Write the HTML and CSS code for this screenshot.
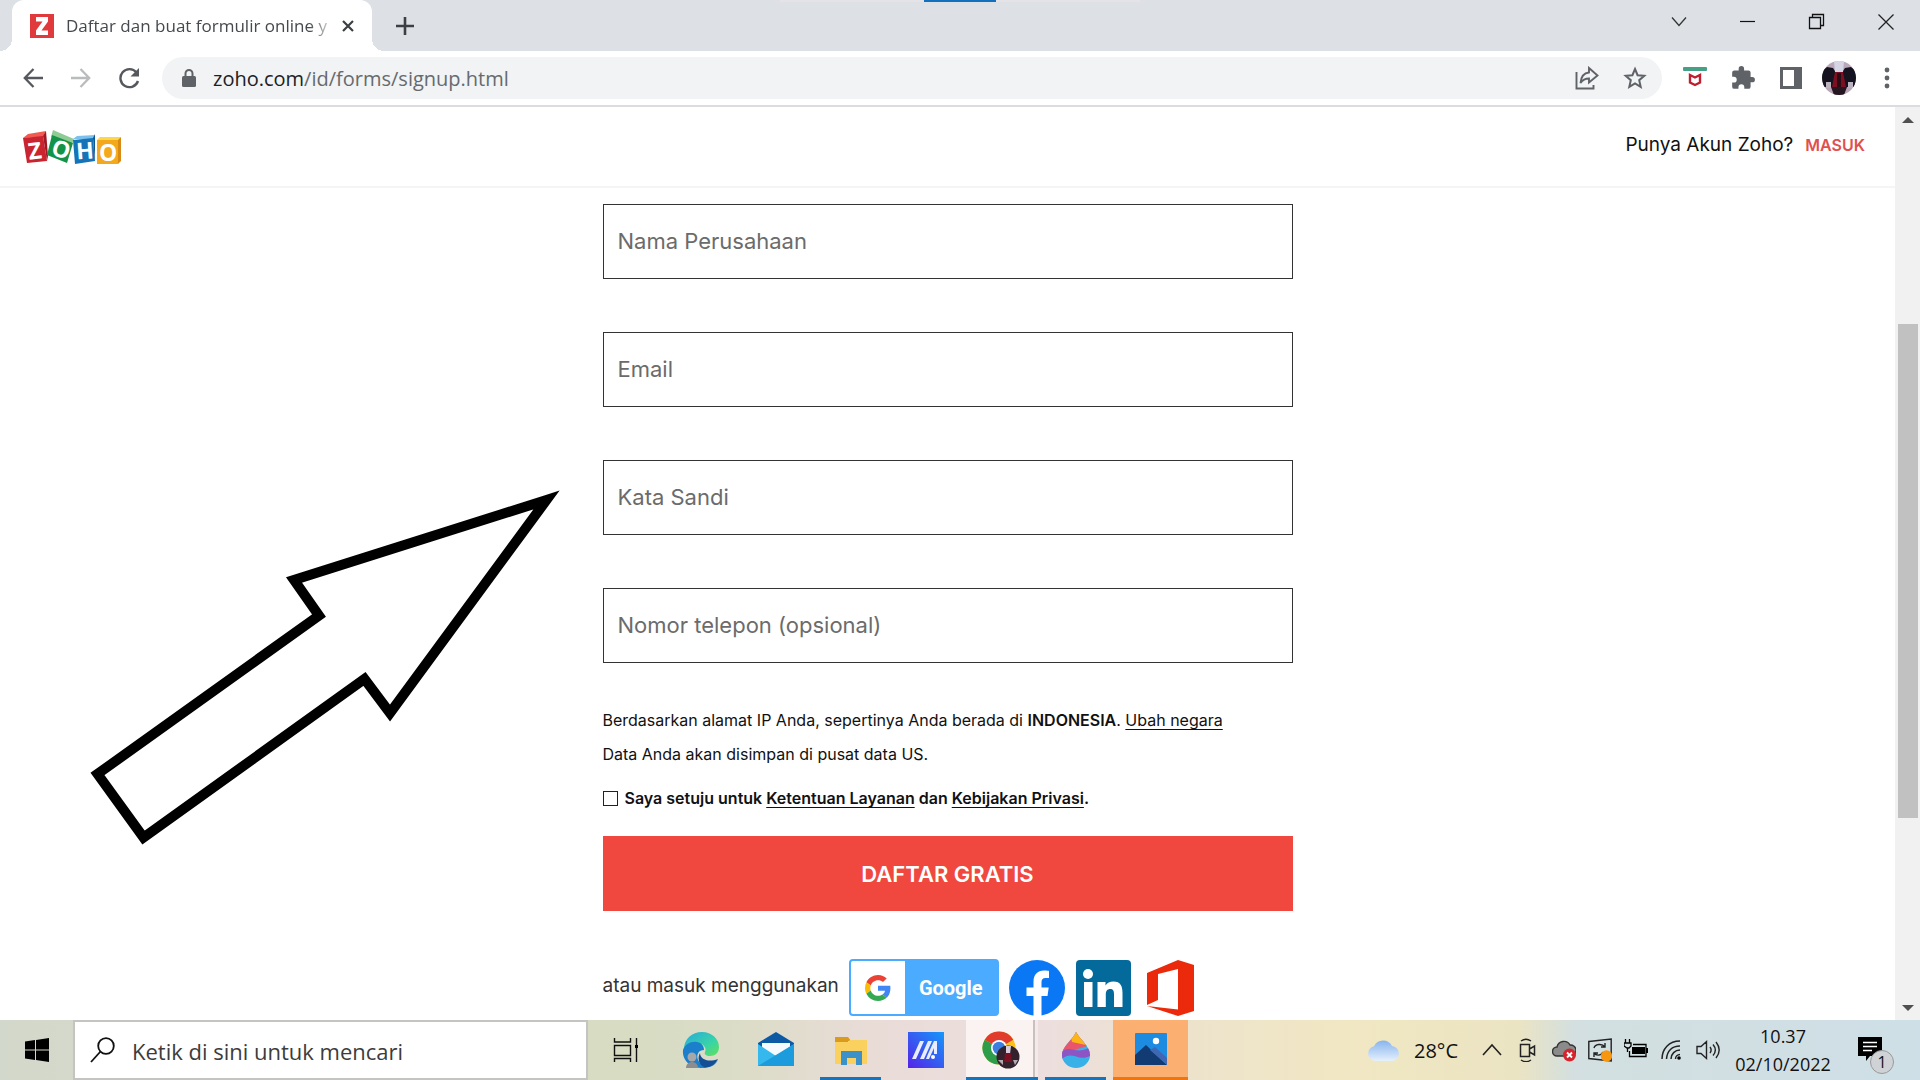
FILE: index.html
```html
<!DOCTYPE html>
<html lang="id">
<head>
<meta charset="utf-8">
<title>Daftar dan buat formulir online</title>
<link rel="stylesheet" href="styles.css">
</head>
<body>
<div class="tabstrip">
  <div class="snap-hint"></div>
  <div class="tab">
    <svg class="favicon" viewBox="0 0 24 24"><rect width="24" height="24" fill="#e03a3c"/><path d="M6 3h12v4.500L11.500 16.500H18V21H6v-4.500L12.500 7.500H6z" fill="#fff"/></svg>
    <span class="tab-title">Daftar dan buat formulir online y</span>
    <button class="plain tab-close" aria-label="Tutup tab"><svg width="14" height="14" viewBox="0 0 14 14"><path d="M2 2l10 10M12 2L2 12" stroke="#3c4043" stroke-width="2.200"/></svg></button>
  </div>
  <button class="plain new-tab" aria-label="Tab baru"><svg width="18" height="18" viewBox="0 0 18 18"><path d="M9 0v18M0 9h18" stroke="#3c4043" stroke-width="2.600"/></svg></button>
  <div class="window-buttons">
    <button class="plain" aria-label="Cari tab"><svg width="18" height="18" viewBox="0 0 18 18"><path d="M2 4.500l7 8 7-8" fill="none" stroke="#333" stroke-width="1.300"/></svg></button>
    <button class="plain" aria-label="Minimalkan"><svg width="18" height="18" viewBox="0 0 18 18"><path d="M1 8.500h15" stroke="#111" stroke-width="1.200"/></svg></button>
    <button class="plain" aria-label="Pulihkan"><svg width="18" height="18" viewBox="0 0 18 18"><path d="M1.500 4.500h11v11h-11zM4.500 4.500v-3h11v11h-3" fill="none" stroke="#111" stroke-width="1.300"/></svg></button>
    <button class="plain" aria-label="Tutup"><svg width="18" height="18" viewBox="0 0 18 18"><path d="M1.500 1.500l15 15M16.500 1.500l-15 15" stroke="#222" stroke-width="1.300"/></svg></button>
  </div>
</div>

<div class="toolbar">
  <div class="slots">
    <button class="plain slot" aria-label="Kembali"><svg width="20" height="20" viewBox="0 0 20 20"><path d="M20 10H2M10.500 1L1.800 10l8.700 9" fill="none" stroke="#55585c" stroke-width="2.300"/></svg></button>
    <button class="plain slot" aria-label="Maju"><svg width="20" height="20" viewBox="0 0 20 20"><path d="M0 10h18M9.500 1l8.700 9-8.700 9" fill="none" stroke="#b9bbbd" stroke-width="2.300"/></svg></button>
    <button class="plain slot" aria-label="Muat ulang"><svg width="22" height="22" viewBox="0 0 22 22"><path d="M18.500 5.500A9 9 0 1 0 20 14" fill="none" stroke="#55585c" stroke-width="2.400"/><path d="M21 1v8.500h-8.500z" fill="#55585c"/></svg></button>
  </div>
  <div class="omnibox">
    <svg width="14" height="18" viewBox="0 0 14 18"><rect y="7" width="14" height="11" rx="1.500" fill="#5f6368"/><path d="M3.500 8V4.500a3.500 3.500 0 0 1 7 0V8" fill="none" stroke="#5f6368" stroke-width="2"/></svg>
    <div class="url"><span class="host">zoho.com</span>/id/forms/signup.html</div>
    <button class="plain slot" aria-label="Bagikan"><svg width="24" height="24" viewBox="0 0 24 24"><path d="M1.500 6v16.500h17V19M14 2l8.500 7.500L14 16.500v-4c-4 0-6.500 1.500-8.500 4.500C6 11 9 7 14 6.500z" fill="none" stroke="#5f6368" stroke-width="1.900"/></svg></button>
    <button class="plain slot" aria-label="Tandai"><svg width="24" height="24" viewBox="0 0 24 24"><path d="M12 3l2.600 6.200 6.700.6-5.100 4.400 1.500 6.600-5.700-3.500-5.700 3.500 1.500-6.600-5.100-4.400 6.700-.6z" fill="none" stroke="#5f6368" stroke-width="2"/></svg></button>
  </div>
  <div class="slots">
    <button class="plain slot" aria-label="McAfee"><svg width="24" height="24" viewBox="0 0 24 24"><rect y="1" width="24" height="4" rx="1" fill="#45a086"/><path d="M7 9l5 2.500L17 9v7.500L12 19l-5-2.500z" fill="none" stroke="#c01f31" stroke-width="2.400"/></svg></button>
    <button class="plain slot" aria-label="Ekstensi"><svg width="26" height="26" viewBox="0 0 24 24"><path d="M20.500 11H19V7a2 2 0 0 0-2-2h-4V3.500a2.500 2.500 0 0 0-5 0V5H4a2 2 0 0 0-2 2v3.800h1.500a2.700 2.700 0 0 1 0 5.400H2V20a2 2 0 0 0 2 2h3.800v-1.500a2.700 2.700 0 0 1 5.400 0V22H17a2 2 0 0 0 2-2v-4h1.500a2.500 2.500 0 0 0 0-5z" fill="#5f6368"/></svg></button>
    <button class="plain slot" aria-label="Panel samping"><svg width="22" height="22" viewBox="0 0 22 22"><path d="M0 0h22v22H0zM3 3v16h11V3z" fill="#5f6368" fill-rule="evenodd"/></svg></button>
    <button class="plain slot" aria-label="Profil"><svg width="34" height="34" viewBox="0 0 34 34"><clipPath id="pf"><circle cx="17" cy="17" r="17"/></clipPath><g clip-path="url(#pf)"><rect width="34" height="34" fill="#b9a9b8"/><path d="M0 10l5-4 6 1 4 6-2 13H0zM34 10l-5-4-6 1-4 6 2 13h13z" fill="#15131f"/><path d="M12 0h10l-1 11h-8z" fill="#d5d5e6"/><path d="M13 11h8l3 15H10z" fill="#7b1022"/><path d="M15 12h4v14h-4z" fill="#2a0b16"/><path d="M4 21h5v6H4zM26 21h5v6h-5z" fill="#b9b4bf"/><path d="M9 26h16l-3 8H12z" fill="#251621"/></g></svg></button>
    <button class="plain slot" aria-label="Menu"><svg width="6" height="22" viewBox="0 0 6 22"><g fill="#5f6368"><circle cx="3" cy="3" r="2.400"/><circle cx="3" cy="11" r="2.400"/><circle cx="3" cy="19" r="2.400"/></g></svg></button>
  </div>
</div>

<div class="viewport">
  <div class="page">
    <header class="site-header">
      <svg class="logo" width="98" height="34" viewBox="0 0 98 34" role="img" aria-label="Zoho">
        <path d="M0 8l5-4 18-3-3 6z" fill="#f05a50"/><path d="M0 8l20-2 4 25-20 2z" fill="#c9242f"/><path d="M20 6l3-5 2 25-1 5z" fill="#a01824"/>
        <path d="M30 0l21 9-2 5-21-7z" fill="#8ecb95"/><path d="M29 5l21 8-6 20-20-8z" fill="#149348"/>
        <path d="M50 9l4-3 18-1-2 4z" fill="#7cc0ec"/><path d="M50 10l20-2 2 23-20 3z" fill="#1574b8"/><path d="M70 8l2-4v26l0 1z" fill="#0d5690"/>
        <path d="M74 10l3-3h21l-3 4z" fill="#fbd84a"/><path d="M74 10h21v24H74z" fill="#f3a81d"/><path d="M95 10l3-3v24l-3 3z" fill="#d88a12"/>
        <g class="logo-letters" fill="#fff"><text x="5" y="29" transform="rotate(-7 12 20)">Z</text><text x="29" y="27" transform="rotate(18 37 19)">O</text><text x="53" y="29" transform="rotate(-4 61 20)">H</text><text x="76" y="31">O</text></g>
      </svg>
      <p class="account">Punya Akun Zoho? <a class="login" href="#">MASUK</a></p>
    </header>
    <form class="signup">
      <div class="fields">
        <label><span class="sr">Nama Perusahaan</span><input class="field" type="text" placeholder="Nama Perusahaan"></label>
        <label><span class="sr">Email</span><input class="field" type="email" placeholder="Email"></label>
        <label><span class="sr">Kata Sandi</span><input class="field" type="password" placeholder="Kata Sandi"></label>
        <label><span class="sr">Nomor telepon</span><input class="field" type="tel" placeholder="Nomor telepon (opsional)"></label>
      </div>
      <div class="notes">
        <p>Berdasarkan alamat IP Anda, sepertinya Anda berada di <b>INDONESIA</b>. <a href="#">Ubah negara</a></p>
        <p>Data Anda akan disimpan di pusat data US.</p>
      </div>
      <div class="agree">
        <input id="agree" class="tick" type="checkbox">
        <label for="agree">Saya setuju untuk <a href="#">Ketentuan Layanan</a> dan <a href="#">Kebijakan Privasi</a>.</label>
      </div>
      <button class="submit" type="button">DAFTAR GRATIS</button>
      <div class="social">
        <span class="social-label">atau masuk menggunakan</span>
        <button class="plain google" type="button">
          <span class="google-mark"><svg width="26" height="26" viewBox="0 0 48 48"><path fill="#EA4335" d="M24 9.500c3.540 0 6.710 1.220 9.210 3.600l6.850-6.850C35.900 2.380 30.470 0 24 0 14.620 0 6.510 5.380 2.560 13.220l7.980 6.190C12.430 13.720 17.740 9.500 24 9.500z"/><path fill="#4285F4" d="M46.980 24.550c0-1.570-.15-3.090-.38-4.550H24v9.020h12.940c-.58 2.960-2.260 5.480-4.780 7.180l7.730 6c4.510-4.180 7.090-10.360 7.090-17.650z"/><path fill="#FBBC05" d="M10.530 28.590A14.500 14.500 0 0 1 9.770 24c0-1.600.27-3.140.76-4.590l-7.980-6.190A24 24 0 0 0 0 24c0 3.880.92 7.540 2.560 10.780l7.970-6.190z"/><path fill="#34A853" d="M24 48c6.480 0 11.930-2.130 15.890-5.810l-7.730-6c-2.150 1.450-4.920 2.300-8.160 2.300-6.260 0-11.570-4.220-13.470-9.910l-7.980 6.190C6.510 42.620 14.620 48 24 48z"/></svg></span>
          <span class="google-name">Google</span>
        </button>
        <button class="plain" type="button" aria-label="Facebook"><svg width="56" height="56" viewBox="0 0 56 56"><circle cx="28" cy="28" r="28" fill="#0a78f5"/><path d="M24.500 56V36h-7v-8.500h7V22c0-7.500 4-11.500 10.500-11.500 2.500 0 5 .4 5 .4V18h-3.500c-3 0-4 1.800-4 4v5.500h7.200L38.500 36h-6v20z" fill="#fff"/></svg></button>
        <button class="plain" type="button" aria-label="LinkedIn"><svg width="56" height="56" viewBox="0 0 56 56"><rect x="1" width="55" height="56" rx="4" fill="#04699b"/><circle cx="13" cy="14" r="5" fill="#fff"/><path d="M9 22h8.500v25H9zM22.500 22h8v3.500c1.500-2.500 4.300-4 8-4 7 0 9 4.500 9 11.500v14H39V34.500c0-3.300-.7-5.500-3.700-5.500-3.200 0-4.500 2.200-4.500 5.500V47h-8.300z" fill="#fff"/></svg></button>
        <button class="plain" type="button" aria-label="Office"><svg width="56" height="56" viewBox="0 0 56 56"><path d="M6 13L37 0l16 5v46l-16 5L6 46l31 3.500V9L17 14v26L6 45z" fill="#ea2a0a"/></svg></button>
      </div>
    </form>
    <svg class="pointer" width="480" height="370" viewBox="84 486 480 370"><path d="M546.500 500L294 580l25 35.500L97.500 774l46 63.500L364.500 679 390 713z" fill="#fff" stroke="#000" stroke-width="10" stroke-miterlimit="10"/></svg>
  </div>
  <div class="scrollbar">
    <svg width="12" height="6" viewBox="0 0 12 6"><path d="M0 6l6-6 6 6z" fill="#505050"/></svg>
    <div class="scroll-track"><div class="scroll-thumb"></div></div>
    <svg width="12" height="6" viewBox="0 0 12 6"><path d="M0 0l6 6 6-6z" fill="#505050"/></svg>
  </div>
</div>

<div class="taskbar">
  <button class="plain start" aria-label="Mulai"><svg width="24" height="24" viewBox="0 0 24 24"><path d="M0 3.500l10-1.400v9.400H0zM11 2l13-2v11.500H11zM0 12.500h10v9.400L0 20.500zM11 12.500h13V24l-13-2z"/></svg></button>
  <label class="search">
    <svg width="26" height="26" viewBox="0 0 26 26"><circle cx="16" cy="9" r="7.800" fill="none" stroke="#111" stroke-width="1.800"/><path d="M10.500 14.500L1 25" stroke="#111" stroke-width="1.800"/></svg>
    <span class="sr">Cari</span><input class="search-input" type="text" placeholder="Ketik di sini untuk mencari">
  </label>
  <div class="apps">
    <button class="plain app" aria-label="Tampilan tugas"><svg width="26" height="26" viewBox="0 0 26 26"><path d="M1.500 1v4h16V1M1.500 8.500h16v10h-16zM1.500 25v-3.500h16V25M23.500 1v24" fill="none" stroke="#111" stroke-width="1.400"/><rect x="22" y="8" width="3" height="3"/></svg></button>
    <button class="plain app" aria-label="Edge"><svg width="38" height="38" viewBox="0 0 38 38"><defs><linearGradient id="eg" x1="0" x2="1" y2="1"><stop offset="0" stop-color="#2aa9dd"/><stop offset=".6" stop-color="#38d3a8"/><stop offset="1" stop-color="#63e05a"/></linearGradient></defs><path d="M2 18C2 8 10 1 20 1s17 7 17 15c0 6-4 9-9 9-4 0-6-2-5-4 2-3-1-9-8-9-6 0-11 3-13 8z" fill="url(#eg)"/><path d="M1 19c2-6 8-9 14-8 5 1 7 4 7 8-5 0-8 4-6 10 2 5 8 6 13 5 3-1 5-3 7-5-3 6-9 8-15 8C9 37 0 30 1 19z" fill="#1b7fcb"/><path d="M18 22c0 6 8 10 18 6-3 6-9 9-14 8-5-2-7-9-4-14z" fill="#144f96"/><circle cx="10" cy="26" r="4.500" fill="#a5a7a8"/><path d="M4 37c0-8 12-8 12 0z" fill="#8b8d8f"/></svg></button>
    <button class="plain app" aria-label="Mail"><svg width="36" height="36" viewBox="0 0 36 36"><path d="M0 11L18 0l18 11v6H0z" fill="#0c59a4"/><path d="M4 11h28v12H4z" fill="#f4fafd"/><path d="M0 12l18 12 18-12v22H0z" fill="#35b8ee"/><path d="M0 34l36-22v22z" fill="#1c9cdd"/></svg></button>
    <button class="plain app running" aria-label="Explorer"><svg width="34" height="34" viewBox="0 0 34 34"><path d="M1 4h13l3 4h-3v4H1z" fill="#d99a1d"/><path d="M1 9h13l2-2h17v24H1z" fill="#fad15f"/><path d="M7 18h21v14h-6v-7h-9v7H7z" fill="#3c92c8"/></svg></button>
    <button class="plain app" aria-label="MyASUS"><svg width="36" height="36" viewBox="0 0 36 36"><defs><linearGradient id="as" x1="0" y1="1" x2="1" y2="0"><stop offset="0" stop-color="#5522e8"/><stop offset="1" stop-color="#1598fa"/></linearGradient></defs><rect width="36" height="36" fill="url(#as)"/><path d="M4 27L12 9h4L8 27zM12 27l8-18h4l-8 18zM20 22l6-13h3v13h-3v-6l-5 11h-3z" fill="#e8eeff"/><circle cx="25" cy="25" r="2" fill="#fff"/></svg></button>
    <button class="plain app running active" aria-label="Chrome"><svg width="38" height="38" viewBox="0 0 38 38"><circle cx="17" cy="17" r="16.500" fill="#fbc116"/><path d="M17 17L2.700 8.700a16.500 16.500 0 0 1 28.600 0z" fill="#e03b2d"/><path d="M17 17L2.700 8.700A16.500 16.500 0 0 0 17 33.500l6-9z" fill="#2d9c4b"/><circle cx="17" cy="17" r="8" fill="#fff"/><circle cx="17" cy="17" r="6.300" fill="#3b7ee0"/><circle cx="26" cy="26" r="11.500" fill="#33222c"/><path d="M24 15h5l-1 8h-4z" fill="#d8cfdd"/><path d="M23 22h6l1 9h-8z" fill="#7b1022"/><path d="M16 29h5v5zM31 29h5l-3 5z" fill="#b4a7b0"/></svg></button>
    <button class="plain app running" aria-label="Paint 3D"><svg width="28" height="36" viewBox="0 0 28 36"><clipPath id="dr"><path d="M14 0c5 9 14 14 14 23a14 13 0 0 1-28 0C0 14 10 9 14 0z"/></clipPath><g clip-path="url(#dr)"><rect width="28" height="36" fill="#38b0e8"/><path d="M0 0h28v13L0 22z" fill="#e9566c"/><path d="M8 0h14l2 13-14-3z" fill="#fdb515"/><path d="M0 20c8-8 14 4 28-5v9c-12 6-18-6-28 3z" fill="#8d55c4"/></g></svg></button>
    <button class="plain app photos" aria-label="Foto"><svg width="32" height="32" viewBox="0 0 32 32"><rect width="32" height="32" rx="1" fill="#1d8be0"/><path d="M0 22l11-10 21 20H0z" fill="#123a73"/><path d="M15 17l5-3 12 11v7z" fill="#3f68b4"/><circle cx="21" cy="8" r="3.200" fill="#fff"/></svg></button>
  </div>
  <div class="tray">
    <div class="weather"><svg width="34" height="24" viewBox="0 0 34 24"><defs><linearGradient id="cl" x2="0" y2="1"><stop offset="0" stop-color="#86b4ee"/><stop offset="1" stop-color="#e6f0fc"/></linearGradient></defs><path d="M8 23a7.500 7.500 0 0 1-1-14.800A10 10 0 0 1 25 8a7.600 7.600 0 0 1 1 15z" fill="url(#cl)"/></svg><span>28°C</span></div>
    <div class="tray-icons">
      <svg viewBox="0 0 24 24"><path d="M3 17l9-10 9 10" fill="none" stroke="#222" stroke-width="1.600"/></svg>
      <svg viewBox="0 0 24 24"><path d="M4.500 6.500h9v12h-9zM13.500 11l5-3v9l-5-3M5 3c3-2 7-2 10 0M5 22c3 2 7 2 10 0" fill="none" stroke="#222" stroke-width="1.500"/></svg>
      <svg viewBox="0 0 24 24"><path d="M5 18a4.500 4.500 0 0 1 0-9A7 7 0 0 1 18 7a5 5 0 0 1 1 11z" fill="#8b8b8b" stroke="#333" stroke-width="1.400"/><circle cx="17.500" cy="17" r="6.500" fill="#d4252f"/><path d="M15 14.500l5 5M20 14.500l-5 5" stroke="#fff" stroke-width="1.800"/></svg>
      <svg viewBox="0 0 24 24"><path d="M.8 3.500L23.200 1v22L.8 20.500z" fill="none" stroke="#222" stroke-width="1.400"/><path d="M6 10c1-4 8-5 11-1M17 5v4h-4M15 14c-2 4-7 4-9 1M6 19v-4h4" fill="none" stroke="#222" stroke-width="1.400"/><circle cx="18.500" cy="18" r="5.700" fill="#f7960f"/></svg>
      <svg viewBox="0 0 24 24"><path d="M8 9h13v7H8z"/><path d="M9 6.500h13v12H5.500V13M1.500 1v4M5.500 1v4M0 5h7v3L5 10H3L0 8zM3.500 10v4" fill="none" stroke="#000" stroke-width="1.300"/><path d="M22 10h2v5h-2z"/></svg>
      <svg viewBox="0 0 24 24"><g fill="none" stroke="#222" stroke-width="1.500"><path d="M2 21C2 11 9 3 20 3M6.500 21C7 13 12 8 20 8M11 21c0-5 4-9 9-9M15.500 21c0-2.500 2-4.500 4.500-4.500"/></g><circle cx="19" cy="20" r="1.800"/></svg>
      <svg viewBox="0 0 24 24"><path d="M1 8.500h4l5.500-5v17l-5.500-5H1zM14 9c1.500 2 1.500 4 0 6M17 6.500c3 3.500 3 7.500 0 11M20 4c4 5 4 11 0 16" fill="none" stroke="#222" stroke-width="1.400"/></svg>
    </div>
    <div class="clock"><span>10.37</span><span>02/10/2022</span></div>
    <div class="notice"><svg width="24" height="24" viewBox="0 0 24 24"><path d="M0 0h24v19H12l-4 5v-5H0z"/><path d="M5 5.500h14M5 9.500h14M5 13.500h9" stroke="#fff" stroke-width="1.500"/></svg><span class="count">1</span></div>
  </div>
</div>
</body>
</html>
```
FILE: styles.css
```css
* { box-sizing: border-box; }
body {
  margin: 0;
  height: 100vh;
  display: flex;
  flex-direction: column;
  overflow: hidden;
  background: #fff;
  color: #111;
  font-family: "Open Sans", "Noto Sans", sans-serif;
}
p { margin: 0; }
svg { display: block; flex: none; }
.plain {
  display: flex;
  align-items: center;
  justify-content: center;
  padding: 0;
  border: 0;
  background: none;
  font: inherit;
}
.sr {
  position: absolute;
  width: 1px;
  height: 1px;
  overflow: hidden;
  clip-path: inset(50%);
}

/* Browser tabs */
.tabstrip {
  position: relative;
  display: flex;
  height: 51px;
  padding-left: 12px;
  background: #dde1e6;
}
.snap-hint {
  position: absolute;
  top: 0;
  left: 50%;
  width: 360px;
  height: 2px;
  transform: translateX(-50%);
  background: linear-gradient(90deg, #e6e3e6 144px, #1470bd 144px 216px, #e6e3e6 216px);
}
.tab {
  position: relative;
  display: flex;
  align-items: center;
  width: 360px;
  padding: 0 16px 0 18px;
  background: #fff;
  border-radius: 12px 12px 0 0;
}
.tab::before, .tab::after {
  content: "";
  position: absolute;
  bottom: 0;
  width: 12px;
  height: 12px;
}
.tab::before { right: 100%; background: radial-gradient(circle at 0 0, #dde1e6 12px, #fff 12px); }
.tab::after { left: 100%; background: radial-gradient(circle at 100% 0, #dde1e6 12px, #fff 12px); }
.favicon { width: 24px; height: 24px; }
.tab-title {
  flex: 1;
  margin: 0 4px 0 12px;
  white-space: nowrap;
  font-size: 17px;
  line-height: 24px;
  color: #45494d;
  mask-image: linear-gradient(90deg, #000 90%, transparent);
}
.tab-close { width: 16px; height: 16px; margin: auto 0; }
.new-tab { width: 66px; }
.window-buttons { display: flex; margin-left: auto; padding-bottom: 8px; }
.window-buttons .plain { width: 69px; }

/* Browser toolbar */
.toolbar {
  display: flex;
  align-items: center;
  height: 56px;
  padding: 0 9px;
  border-bottom: 2px solid #dadcdf;
}
.slots { display: flex; }
.slot { width: 48px; height: 42px; }
.omnibox {
  flex: 1;
  display: flex;
  align-items: center;
  height: 42px;
  margin: 0 9px;
  padding: 0 3px 0 20px;
  border-radius: 21px;
  background: #f1f3f4;
}
.url { flex: 1; margin-left: 17px; font-size: 20px; color: #666a6e; }
.host { color: #202124; }

/* Web page */
.viewport { flex: 1; display: flex; min-height: 0; }
.page { position: relative; flex: 1; overflow: hidden; font-family: Inter, "Liberation Sans", sans-serif; }
.site-header {
  display: flex;
  align-items: center;
  justify-content: space-between;
  height: 81px;
  padding: 0 30px 0 23px;
  border-bottom: 2px solid #f5f5f5;
}
.account { display: flex; align-items: center; gap: 12px; padding-bottom: 4px; font-size: 19px; line-height: 24px; }
.login { font-size: 16px; font-weight: 600; color: #e0504e; text-decoration: none; }
.logo { overflow: visible; }
.logo-letters { font: 700 23px "Open Sans", sans-serif; }
.signup { max-width: 690px; margin: 16px auto 0; font-size: 16px; }
.fields { display: grid; gap: 53px; }
.field {
  display: block;
  width: 100%;
  height: 75px;
  padding: 0 14px 2px;
  border: 1px solid #333;
  border-radius: 0;
  background: #fff;
  font: 22px/28px Inter, "Liberation Sans", sans-serif;
}
.field::placeholder { color: #6b6b6b; opacity: 1; }
.notes { margin-top: 40px; line-height: 34px; }
.notes a, .agree a { color: inherit; text-underline-offset: 3px; }
.notes b { font-weight: 600; }
.agree { display: flex; align-items: center; gap: 7px; margin-top: 10px; line-height: 34px; font-weight: 600; }
.tick {
  appearance: none;
  width: 15px;
  height: 15px;
  margin: 0;
  border: 1px solid #222;
  background: #fff;
}
.submit {
  display: block;
  width: 100%;
  height: 75px;
  margin-top: 21px;
  border: 0;
  background: #f0483f;
  color: #fff;
  font: 600 22px/28px Inter, sans-serif;
}
.social { display: flex; align-items: center; gap: 10px; margin-top: 48px; }
.social-label { font-size: 19px; line-height: 24px; padding-bottom: 3px; color: #333; }
.google { height: 57px; border: 2px solid #4aabff; border-radius: 4px; background: #4aabff; overflow: hidden; }
.google-mark { display: flex; align-items: center; justify-content: center; width: 54px; height: 100%; background: #fff; }
.google-name { width: 92px; color: #fff; font: 700 20px Roboto, sans-serif; }
.pointer { position: absolute; left: 84px; top: 379px; }
.scrollbar {
  display: flex;
  flex-direction: column;
  align-items: center;
  width: 25px;
  padding: 10px 0 9px;
  background: #f1f1f1;
}
.scroll-track { flex: 1; display: flex; width: 20px; padding: 8px 0; }
.scroll-thumb { width: 100%; height: 57%; margin-top: 193px; background: #c1c1c1; }

/* Windows taskbar */
.taskbar {
  display: flex;
  height: 60px;
  background: linear-gradient(90deg, #d3d8cc 0, #d7dcc2 32%, #dcdcc8 39%, #e9dcd7 45%, #ecdede 54%, #ede3cc 62%, #f1e7c3 70%, #ebe4c2 79%, #d3dfe0 82%, #cfdfe7 100%);
}
.start { width: 73px; }
.search {
  display: flex;
  align-items: center;
  width: 515px;
  padding: 0 15px;
  gap: 16px;
  border: 2px solid #c4c5c1;
  background: #fff;
}
.search-input { flex: 1; min-width: 0; padding: 2px 0 0; border: 0; outline: 0; font: 22px/30px "Open Sans", sans-serif; }
.search-input::placeholder { color: #3c3c3c; opacity: 1; }
.apps { display: flex; }
.app { position: relative; width: 75px; }
.running::after {
  content: "";
  position: absolute;
  left: 7px;
  right: 7px;
  bottom: 0;
  height: 3px;
  background: #1873b8;
}
.active { background: linear-gradient(90deg, transparent 3px, #fbf3f2 3px 70px, #c9c0c0 70px 72px, #f5eaea 72px); }
.active::after { left: 3px; right: 0; }
.photos { background: #fbb072; border-bottom: 3px solid #ee7510; }
.tray { display: flex; align-items: center; margin-left: auto; padding-right: 26px; font-size: 18px; }
.weather { display: flex; align-items: center; gap: 13px; margin-right: 22px; font-size: 20px; }
.tray-icons { display: flex; gap: 12px; }
.tray-icons svg { width: 24px; height: 24px; }
.clock { display: flex; flex-direction: column; align-items: center; width: 126px; line-height: 28px; font-size: 18px; }
.notice { position: relative; width: 36px; padding: 3px 0 5px; margin-left: 12px; }
.count {
  position: absolute;
  right: 0;
  bottom: -8px;
  width: 24px;
  height: 24px;
  border: 1px solid #999;
  border-radius: 50%;
  background: #cfd3d5;
  font-size: 16px;
  line-height: 22px;
  text-align: center;
}
```
